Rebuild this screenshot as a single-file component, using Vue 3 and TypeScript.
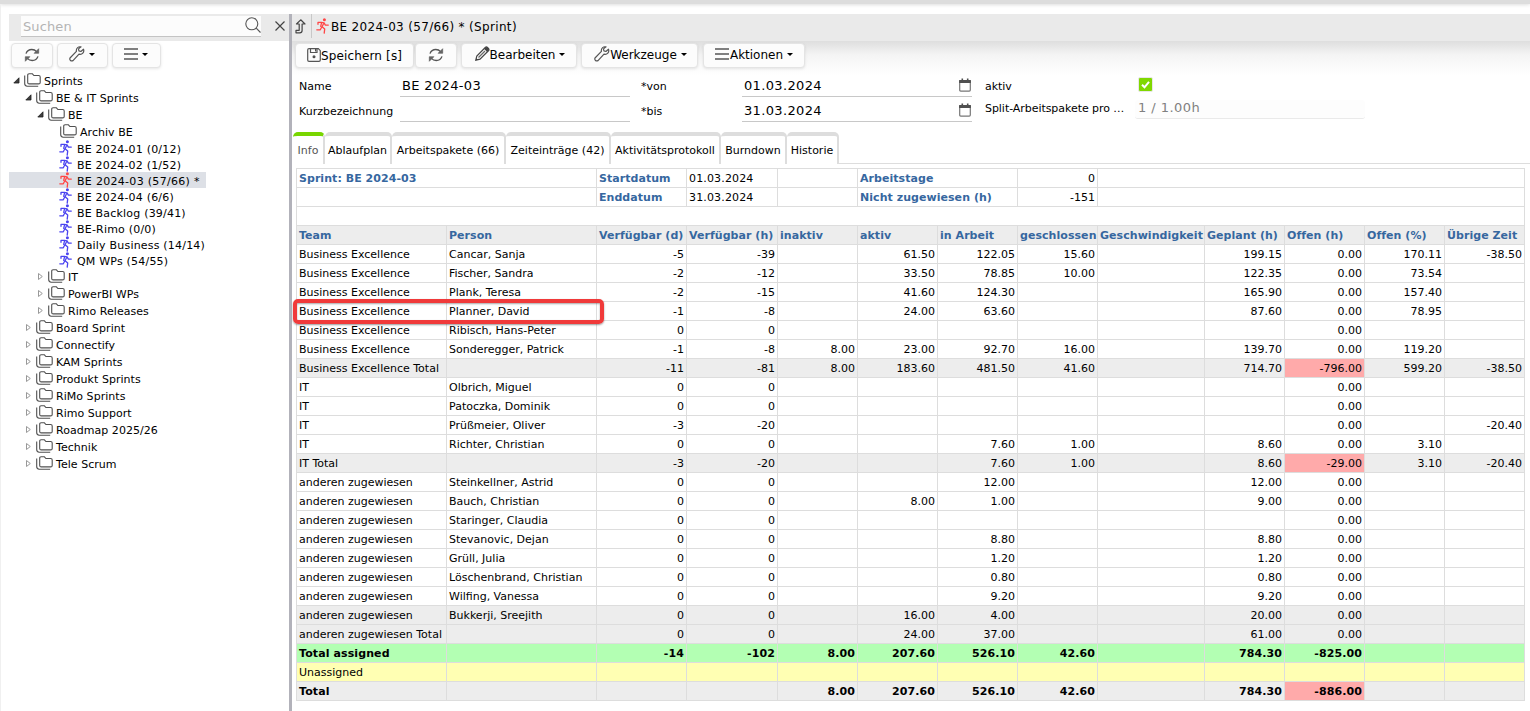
<script setup lang="ts">
import { ref } from 'vue';

interface TreeNode {
  label: string;
  level: number;
  kind: 'folder' | 'sprint';
  state?: 'open' | 'closed';
}

interface Row {
  cells: string[];
  style?: string;
}

const selected = ref('BE 2024-03 (57/66) *');
const activeTab = ref('Info');
const search = ref('');

const folder = (label: string, level: number, state?: 'open' | 'closed'): TreeNode => ({ label, level, kind: 'folder', state });
const sprint = (label: string): TreeNode => ({ label, level: 3, kind: 'sprint' });

const tree: TreeNode[] = [
  folder('Sprints', 0, 'open'),
  folder('BE & IT Sprints', 1, 'open'),
  folder('BE', 2, 'open'),
  folder('Archiv BE', 3),
  sprint('BE 2024-01 (0/12)'),
  sprint('BE 2024-02 (1/52)'),
  sprint('BE 2024-03 (57/66) *'),
  sprint('BE 2024-04 (6/6)'),
  sprint('BE Backlog (39/41)'),
  sprint('BE-Rimo (0/0)'),
  sprint('Daily Business (14/14)'),
  sprint('QM WPs (54/55)'),
  folder('IT', 2, 'closed'),
  folder('PowerBI WPs', 2, 'closed'),
  folder('Rimo Releases', 2, 'closed'),
  folder('Board Sprint', 1, 'closed'),
  folder('Connectify', 1, 'closed'),
  folder('KAM Sprints', 1, 'closed'),
  folder('Produkt Sprints', 1, 'closed'),
  folder('RiMo Sprints', 1, 'closed'),
  folder('Rimo Support', 1, 'closed'),
  folder('Roadmap 2025/26', 1, 'closed'),
  folder('Technik', 1, 'closed'),
  folder('Tele Scrum', 1, 'closed'),
];

const tabs = [
  { label: 'Info', cls: 't-info' },
  { label: 'Ablaufplan', cls: 't-plan' },
  { label: 'Arbeitspakete (66)', cls: 't-packages' },
  { label: 'Zeiteinträge (42)', cls: 't-times' },
  { label: 'Aktivitätsprotokoll', cls: 't-log' },
  { label: 'Burndown', cls: 't-burn' },
  { label: 'Historie', cls: 't-history' },
];

const columnWidths = [150, 150, 90, 91, 80, 80, 80, 80, 107, 80, 80, 80, 80];
const columns = [
  'Team', 'Person', 'Verfügbar (d)', 'Verfügbar (h)', 'inaktiv', 'aktiv', 'in Arbeit',
  'geschlossen', 'Geschwindigkeit', 'Geplant (h)', 'Offen (h)', 'Offen (%)', 'Übrige Zeit',
];

// one line per row, cells separated by "|"
const row = (line: string, style?: string): Row => ({ cells: line.split('|'), style });

const rows: Row[] = [
  row('Business Excellence|Cancar, Sanja|-5|-39||61.50|122.05|15.60||199.15|0.00|170.11|-38.50'),
  row('Business Excellence|Fischer, Sandra|-2|-12||33.50|78.85|10.00||122.35|0.00|73.54|'),
  row('Business Excellence|Plank, Teresa|-2|-15||41.60|124.30|||165.90|0.00|157.40|'),
  row('Business Excellence|Planner, David|-1|-8||24.00|63.60|||87.60|0.00|78.95|', 'marked'),
  row('Business Excellence|Ribisch, Hans-Peter|0|0|||||||0.00||'),
  row('Business Excellence|Sonderegger, Patrick|-1|-8|8.00|23.00|92.70|16.00||139.70|0.00|119.20|'),
  row('Business Excellence Total||-11|-81|8.00|183.60|481.50|41.60||714.70|-796.00|599.20|-38.50', 'gray'),
  row('IT|Olbrich, Miguel|0|0|||||||0.00||'),
  row('IT|Patoczka, Dominik|0|0|||||||0.00||'),
  row('IT|Prüßmeier, Oliver|-3|-20|||||||0.00||-20.40'),
  row('IT|Richter, Christian|0|0|||7.60|1.00||8.60|0.00|3.10|'),
  row('IT Total||-3|-20|||7.60|1.00||8.60|-29.00|3.10|-20.40', 'gray'),
  row('anderen zugewiesen|Steinkellner, Astrid|0|0|||12.00|||12.00|0.00||'),
  row('anderen zugewiesen|Bauch, Christian|0|0||8.00|1.00|||9.00|0.00||'),
  row('anderen zugewiesen|Staringer, Claudia|0|0|||||||0.00||'),
  row('anderen zugewiesen|Stevanovic, Dejan|0|0|||8.80|||8.80|0.00||'),
  row('anderen zugewiesen|Grüll, Julia|0|0|||1.20|||1.20|0.00||'),
  row('anderen zugewiesen|Löschenbrand, Christian|0|0|||0.80|||0.80|0.00||'),
  row('anderen zugewiesen|Wilfing, Vanessa|0|0|||9.20|||9.20|0.00||'),
  row('anderen zugewiesen|Bukkerji, Sreejith|0|0||16.00|4.00|||20.00|0.00||', 'gray'),
  row('anderen zugewiesen Total||0|0||24.00|37.00|||61.00|0.00||', 'gray'),
  row('Total assigned||-14|-102|8.00|207.60|526.10|42.60||784.30|-825.00||', 'green strong'),
  row('Unassigned||||||||||||', 'yellow'),
  row('Total||||8.00|207.60|526.10|42.60||784.30|-886.00||', 'gray strong'),
];

// a negative "Offen (h)" is flagged, except in the green summary row
const isNegative = (r: Row, i: number) =>
  i === 10 && r.cells[i].startsWith('-') && !r.style?.includes('green');
</script>

<template>
  <svg class="defs" width="0" height="0">
    <symbol id="i-folder" viewBox="0 0 17 14">
      <path d="M3.7 2.2q0-1.4 1.4-1.4h3.3l1.5 1.7h4.8q1.5 0 1.5 1.5v5.4q0 1.5-1.5 1.5H5.2q-1.5 0-1.5-1.5z" fill="#fff" stroke="#505050" stroke-width="1.1" />
      <path d="M.7 2.4v8.2q0 2.6 2.5 2.6h11" fill="none" stroke="#505050" stroke-width="1.1" />
    </symbol>
    <symbol id="i-run" viewBox="0 0 13 16">
      <circle cx="8.4" cy="1.8" r="1.5" fill="currentColor" />
      <path d="M2 6.300V4.300h3.400l2.600.5-1.900 4 2.600 2.300-.5 4M8 4.800l1.400 2.300h2.900M5.600 9.300l-1.300 2.500H.8M5.600 4.600L4.700 8.400" fill="none" stroke="currentColor" stroke-width="1.300" stroke-linecap="round" stroke-linejoin="round" />
    </symbol>
    <symbol id="i-refresh" viewBox="0 0 16 14">
      <path d="M2 5.600C3 2.700 5.200 1.500 7.800 1.500c2 0 3.600.8 4.800 2.200M14 8.400c-1 2.900-3.200 4.100-5.800 4.100-2 0-3.600-.8-4.800-2.200" fill="none" stroke="#555" stroke-width="1.300" />
      <path d="M14.700.7v4.600h-4.600zM1.300 13.300V8.700h4.600z" fill="#666" stroke="#555" stroke-width=".6" stroke-linejoin="round" />
    </symbol>
    <symbol id="i-wrench" viewBox="0 0 16 16">
      <path d="M14.500 3.200l-2.600 2.300-2-.6-.4-2L12 .9C9.600.2 6.900 2 7.400 5.400L1 12q-.6 1.700.500 2.500 1 .9 2.500.100L10 8.200c3.200.8 5.600-2 4.500-5z" fill="none" stroke="#555" stroke-width="1.200" stroke-linejoin="round" />
    </symbol>
    <symbol id="i-menu" viewBox="0 0 14 12">
      <path d="M0 1h14M0 6h14M0 11h14" stroke="#555" stroke-width="1.300" />
    </symbol>
    <symbol id="i-save" viewBox="0 0 14 14">
      <path d="M.7 2q0-1.300 1.300-1.300h9.300l2 2V12q0 1.300-1.300 1.300H2Q.7 13.300.7 12zM3.500.8v3.700h6.500V.8" fill="none" stroke="#555" stroke-width="1.200" />
      <path d="M8 1h1.200v2.500H8z" fill="#505050" />
      <circle cx="7" cy="8.800" r="1.500" fill="#505050" />
    </symbol>
    <symbol id="i-pencil" viewBox="0 0 15 15">
      <path d="M.8 14.200l1-4.200L10.500 1.300q1-.8 2.200.4l.7.700q1 1.200.2 2.100L5 13.200z" fill="#fff" stroke="#444" stroke-width="1.200" />
      <path d="M9 2.800l3.300 3.400 1.500-1.700q.5-1-.3-2L12.600 1.500q-1-.9-2 0zM.8 14.200l.5-2.200 1.700 1.700z" fill="#444" />
      <path d="M3.500 11.500l6.500-6.500" stroke="#666" stroke-width="1.300" />
    </symbol>
    <symbol id="i-up" viewBox="0 0 11 15">
      <path d="M5.700.8L1.500 5h2.700v6.300H1v2.500h3.700q2.400 0 2.400-2.400V5H10z" fill="none" stroke="#444" stroke-width="1.200" stroke-linejoin="round" />
    </symbol>
    <symbol id="i-calendar" viewBox="0 0 12 14">
      <path d="M.7 3.500h10.600v8.600q0 1-1 1H1.700q-1 0-1-1z" fill="#fff" stroke="#777" stroke-width="1.200" />
      <path d="M.1 2h11.800v3H.1zM2.500.5h1.600v2H2.500zM7.900.5h1.600v2H7.900z" fill="#505050" />
    </symbol>
  </svg>

  <div class="app">
    <div class="top-strip"></div>
    <div class="body">
      <aside class="sidebar">
        <div class="search-bar">
          <div class="search-field">
            <input v-model="search" placeholder="Suchen">
            <svg class="magnifier" viewBox="0 0 16 16"><circle cx="6.800" cy="6.800" r="6" /><path d="M11.200 11.200l4.300 4.300" /></svg>
          </div>
          <svg class="close" viewBox="0 0 10 10"><path d="M.5.5l9 9M9.500.5l-9 9" /></svg>
        </div>
        <div class="toolbar side-tools">
          <button class="btn s-refresh"><svg class="ic-refresh"><use href="#i-refresh" /></svg></button>
          <button class="btn s-wrench"><svg class="ic-wrench"><use href="#i-wrench" /></svg><i class="caret"></i></button>
          <button class="btn s-menu"><svg class="ic-menu"><use href="#i-menu" /></svg><i class="caret"></i></button>
        </div>
        <ul class="tree">
          <li
            v-for="node in tree"
            :key="node.label"
            :class="[node.kind, 'level-' + node.level, { selected: node.label === selected }]"
            @click="selected = node.label"
          >
            <span class="twisty">
              <svg v-if="node.state === 'open'" viewBox="0 0 7 7"><path d="M6 .8V6H.8z" fill="#404040" stroke="#202020" stroke-width=".8" /></svg>
              <svg v-else-if="node.state === 'closed'" viewBox="0 0 7 7"><path d="M1.500.5L5.300 3.500 1.500 6.500z" fill="#fff" stroke="#999" /></svg>
            </span>
            <svg v-if="node.kind === 'folder'" class="ic-folder"><use href="#i-folder" /></svg>
            <svg v-else class="ic-run"><use href="#i-run" /></svg>
            <span class="label">{{ node.label }}</span>
          </li>
        </ul>
      </aside>

      <main class="main">
        <header class="title-bar">
          <svg class="ic-up"><use href="#i-up" /></svg>
          <span class="divider"></span>
          <svg class="ic-run"><use href="#i-run" /></svg>
          <span class="title">BE 2024-03 (57/66) * (Sprint)</span>
        </header>
        <div class="toolbar main-tools">
          <button class="btn m-save"><svg class="ic-save"><use href="#i-save" /></svg>Speichern [s]</button>
          <button class="btn m-refresh"><svg class="ic-refresh"><use href="#i-refresh" /></svg></button>
          <button class="btn m-edit"><svg class="ic-pencil"><use href="#i-pencil" /></svg>Bearbeiten<i class="caret"></i></button>
          <button class="btn m-tools"><svg class="ic-wrench"><use href="#i-wrench" /></svg>Werkzeuge<i class="caret"></i></button>
          <button class="btn m-actions"><svg class="ic-menu"><use href="#i-menu" /></svg>Aktionen<i class="caret"></i></button>
        </div>

        <section class="form">
          <div class="form-col first">
            <div class="field"><label>Name</label><div class="value">BE 2024-03</div></div>
            <div class="field"><label>Kurzbezeichnung</label><div class="value"></div></div>
          </div>
          <div class="form-col second">
            <div class="field"><label>*von</label><div class="value">01.03.2024<svg class="ic-cal"><use href="#i-calendar" /></svg></div></div>
            <div class="field"><label>*bis</label><div class="value">31.03.2024<svg class="ic-cal"><use href="#i-calendar" /></svg></div></div>
          </div>
          <div class="form-col third">
            <div class="field"><label>aktiv</label><span class="check"><svg viewBox="0 0 13 13"><path d="M3 6.800l2.500 2.500L10 3.800" /></svg></span></div>
            <div class="field"><label>Split-Arbeitspakete pro …</label><div class="readonly">1 / 1.00h</div></div>
          </div>
        </section>

        <nav class="tabs">
          <div
            v-for="tab in tabs"
            :key="tab.label"
            class="tab"
            :class="[tab.cls, { active: tab.label === activeTab }]"
            @click="activeTab = tab.label"
          >
            <span>{{ tab.label }}</span>
          </div>
          <div class="tab-rest"></div>
        </nav>

        <table class="report">
          <colgroup>
            <col v-for="(w, i) in columnWidths" :key="i" :style="{ width: w + 'px' }">
          </colgroup>
          <tbody>
            <tr>
              <th colspan="2">Sprint: BE 2024-03</th>
              <th>Startdatum</th>
              <td class="date">01.03.2024</td>
              <td></td>
              <th colspan="2">Arbeitstage</th>
              <td class="num">0</td>
              <td colspan="5"></td>
            </tr>
            <tr>
              <th colspan="2"></th>
              <th>Enddatum</th>
              <td class="date">31.03.2024</td>
              <td></td>
              <th colspan="2">Nicht zugewiesen (h)</th>
              <td class="num">-151</td>
              <td colspan="5"></td>
            </tr>
            <tr><td colspan="13"></td></tr>
            <tr class="gray">
              <th v-for="c in columns" :key="c">{{ c }}</th>
            </tr>
            <tr v-for="(r, n) in rows" :key="n" :class="r.style">
              <td
                v-for="(cell, i) in r.cells"
                :key="i"
                :class="{ num: i > 1, negative: isNegative(r, i) }"
              >{{ cell }}</td>
            </tr>
          </tbody>
        </table>
      </main>
    </div>
  </div>
</template>

<style>
body {
  margin: 0;
  overflow: hidden;
  background: #fff;
}
</style>

<style scoped>
.defs {
  position: absolute;
}
.app {
  box-sizing: border-box;
  width: 1530px;
  height: 711px;
  overflow: hidden;
  font-family: Verdana, "DejaVu Sans", sans-serif;
  font-size: 11px;
  color: #000;
}
.app * {
  box-sizing: border-box;
}
svg {
  flex: none;
  display: block;
}
.top-strip {
  height: 4px;
  background: #ddd;
  box-shadow: 0 0 4px #ccc;
}
.body {
  display: flex;
  height: 707px;
  padding-top: 10px;
  border-left: 1px solid #f0f0f0;
}

/* sidebar */
.sidebar {
  width: 280px;
  margin-left: 8px;
}
.search-bar {
  display: flex;
  align-items: flex-start;
  height: 27px;
  padding: 2px 0 0 12px;
  background: #eaeaea;
}
.search-field {
  display: flex;
  width: 240px;
  height: 21px;
  background: #fcfcfc;
  border-bottom: 1px solid #c4c4c4;
}
.search-field input {
  width: 223px;
  padding: 0 2px;
  border: 0;
  outline: 0;
  background: transparent;
  font: 13px Verdana, "DejaVu Sans", sans-serif;
  letter-spacing: 0.1px;
}
.search-field input::placeholder {
  color: #b4b4b4;
}
.magnifier {
  width: 16px;
  height: 16px;
  margin: 1px 0 0 2px;
  fill: none;
  stroke: #555;
  stroke-width: 1.1;
}
.close {
  width: 10px;
  height: 10px;
  margin: 5px 0 0 14px;
  fill: none;
  stroke: #444;
  stroke-width: 1.2;
}
.toolbar {
  display: flex;
}
.side-tools {
  padding: 2px 0 0 2px;
  gap: 3px;
  height: 31px;
}
.btn {
  display: flex;
  align-items: center;
  justify-content: center;
  height: 25px;
  padding: 0;
  border: 1px solid #e4e4e4;
  border-radius: 4px;
  background: #fcfcfc;
  box-shadow: 0 1px 3px rgba(0, 0, 0, 0.1);
  font: 12px Verdana, "DejaVu Sans", sans-serif;
  color: #000;
  white-space: nowrap;
}
.s-refresh { width: 42px; margin-right: 1px; padding-bottom: 2px; }
.s-wrench { width: 51px; padding-bottom: 3px; margin-right: 1px; }
.s-menu { width: 49px; padding-bottom: 3px; }
.caret {
  margin-left: 4px;
  border: 3px solid transparent;
  border-top-color: #000;
  border-bottom: 0;
}
.side-tools .caret { margin-left: 4px; margin-right: 1px; }
.ic-refresh { width: 16px; height: 14px; }
.ic-wrench { width: 16px; height: 16px; }
.ic-menu { width: 14px; height: 12px; }
.ic-save { width: 14px; height: 14px; }
.ic-pencil { width: 15px; height: 15px; }
.ic-up { width: 11px; height: 15px; }
.ic-cal { width: 12px; height: 14px; }
.ic-run { width: 13px; height: 16px; }
.ic-folder { width: 17px; height: 14px; }

.tree {
  margin: 0;
  padding: 0;
  list-style: none;
}
.tree li {
  display: flex;
  align-items: center;
  width: max-content;
  height: 17px;
  white-space: nowrap;
  cursor: default;
}
.level-0 { padding-left: 4px; }
.level-1 { padding-left: 16px; }
.level-2 { padding-left: 28px; }
.level-3 { padding-left: 40px; }
.twisty {
  width: 11px;
}
.twisty svg {
  width: 7px;
  height: 7px;
}
.folder .label {
  margin-left: 3px;
  padding-top: 1px;
  letter-spacing: 0.04px;
}
.folder .ic-folder {
  margin-top: -1px;
}
.tree .sprint {
  height: 16px;
  padding-right: 6px;
}
.sprint .ic-run {
  margin-left: -1px;
  color: #4a43f0;
}
.sprint .label {
  margin-left: 5px;
  padding-top: 2px;
  letter-spacing: 0.2px;
}
.sprint.selected .label {
  letter-spacing: 0.3px;
}
.sprint.selected {
  background: #dde0e6;
}
.sprint.selected .ic-run {
  color: #ff4545;
}

/* main pane */
.main {
  flex: none;
  width: 1241px;
  border-left: 3px solid #b2b2ba;
}
.title-bar {
  display: flex;
  align-items: center;
  height: 27px;
  padding: 0 0 3px 3px;
  background: #eaeaea;
}
.divider {
  width: 1px;
  height: 24px;
  margin: 0 4px 0 5px;
  background: #c8c8c8;
}
.title-bar .ic-run {
  color: #ff4545;
}
.title {
  margin-left: 2px;
  padding-top: 1px;
  font-size: 12px;
  letter-spacing: 0.33px;
}
.main-tools {
  height: 34px;
  padding: 2px 0 0 3px;
  background: linear-gradient(#dedede, #f4f4f4 40%, #fff);
}
.m-save { width: 119px; margin-right: 1px; letter-spacing: 0.15px; }
.m-save .ic-save { margin-top: -1px; }
.m-refresh { width: 42px; margin-right: 4px; padding-bottom: 2px; }
.m-edit { width: 116px; margin-right: 4px; padding-bottom: 2px; }
.m-edit .ic-pencil { margin: -2px 0 0 2px; }
.m-tools { width: 117px; margin-right: 5px; padding-bottom: 2px; }
.m-actions { width: 102px; padding-bottom: 2px; }
.m-tools .ic-wrench { margin: -1px 0 0 2px; }
.m-actions .ic-menu { margin-top: -2px; margin-right: 1px; }

.form {
  display: flex;
  height: 57px;
}
.form-col {
  flex: none;
}
.first { width: 338px; margin-left: 7px; }
.second { width: 331px; margin-left: 4px; }
.third { width: 400px; margin-left: 13px; }
.field {
  display: flex;
  height: 25px;
}
.field label {
  flex: none;
  width: 101px;
  padding-top: 5px;
  line-height: 13px;
  white-space: nowrap;
}
.value {
  display: flex;
  justify-content: space-between;
  width: 230px;
  height: 22px;
  padding: 3px 1px 0 2px;
  border-bottom: 1px solid #c8c8c8;
  font-size: 13px;
  line-height: 16px;
  letter-spacing: 0.35px;
}
.third .field label {
  width: 150px;
  letter-spacing: -0.05px;
}
.third .field + .field label {
  padding-top: 2px;
}
.check {
  width: 15px;
  height: 15px;
  margin: 2px 0 0 3px;
  border: 1px solid #e8e8e8;
  border-radius: 2px;
  background: #80d800;
}
.check svg {
  width: 13px;
  height: 13px;
  fill: none;
  stroke: #fff;
  stroke-width: 2;
}
.readonly {
  width: 230px;
  height: 19px;
  padding: 0 3px;
  border-bottom: 1px solid #eaeaea;
  border-radius: 3px;
  background: #fdfdfd;
  color: #808080;
  font-size: 13px;
  line-height: 16px;
  letter-spacing: 0.45px;
}

/* tabs */
.tabs {
  display: flex;
  height: 32px;
  padding-left: 1px;
}
.tab {
  flex: none;
  border-top: 4px solid #ddd;
  border-right: 2px solid #ddd;
  border-radius: 5px 5px 0 0;
  text-align: center;
  line-height: 29px;
  white-space: nowrap;
}
.tab.active {
  border-top-color: #78d600;
  color: #555;
}
.t-info { width: 32px; }
.t-plan { width: 67px; }
.t-packages { width: 114px; }
.t-times { width: 105px; }
.t-log { width: 110px; }
.t-burn { width: 66px; }
.t-history { width: 52px; }
.tab-rest {
  flex: 1;
  border-bottom: 1px solid #ddd;
}

/* report table */
.report {
  width: 1229px;
  margin: 4px 0 0 4px;
  table-layout: fixed;
  border-collapse: separate;
  border-spacing: 0;
  border-top: 1px solid #ddd;
  border-left: 1px solid #ddd;
}
.report td,
.report th {
  height: 19px;
  padding: 1px 2px 0;
  border-right: 1px solid #ddd;
  border-bottom: 1px solid #ddd;
  line-height: 17px;
  text-align: left;
  white-space: nowrap;
}
.report th {
  color: #36679f;
  letter-spacing: 0.05px;
}
.report .num {
  text-align: right;
}
.report .date {
  letter-spacing: 0.15px;
}
.gray { background: #ededed; }
.green { background: #b3ffb3; }
.yellow { background: #ffffb3; }
.strong {
  font-weight: bold;
  letter-spacing: 0.1px;
}
.report .negative {
  background: #ffaaaa;
}
.marked td:first-child {
  position: relative;
}
/* red frame round team and person, over the cell borders */
.marked td:first-child::after {
  content: "";
  box-sizing: border-box;
  position: absolute;
  top: -3px;
  left: -4px;
  width: 311px;
  height: 25px;
  border: 4px solid #f03a3a;
  border-radius: 5px;
  box-shadow: 0 1px 2px rgba(0, 0, 0, 0.4), inset 0 1px 2px rgba(0, 0, 0, 0.35);
}
</style>
